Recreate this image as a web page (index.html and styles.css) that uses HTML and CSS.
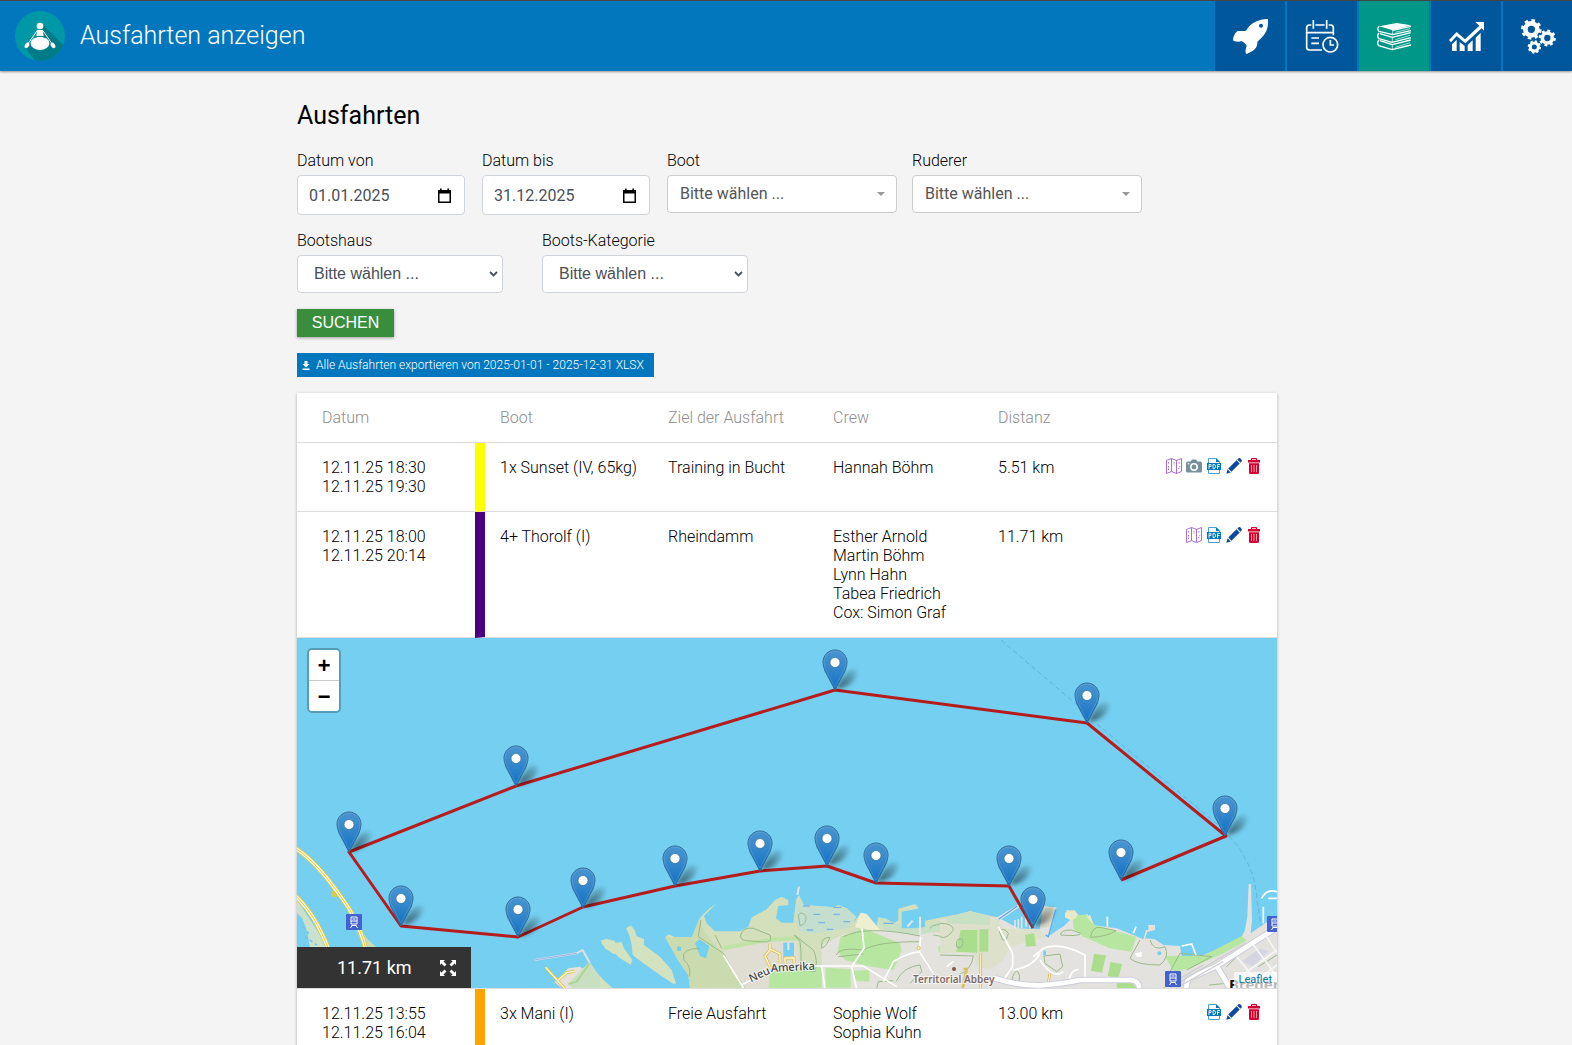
FILE: index.html
```html
<!DOCTYPE html>
<html lang="de">
<head>
<meta charset="utf-8">
<meta name="viewport" content="width=device-width, initial-scale=1">
<title>Ausfahrten anzeigen</title>
<link rel="stylesheet" href="styles.css">
</head>
<body>
<svg class="defs" aria-hidden="true">
  <defs>
    <linearGradient id="pin-fill" x1="0" y1="0" x2="0" y2="1"><stop offset="0" stop-color="#4795d0"/><stop offset=".35" stop-color="#3a8bcb"/><stop offset="1" stop-color="#126fc6"/></linearGradient>
    <filter id="soft" x="-40%" y="-40%" width="180%" height="180%"><feGaussianBlur stdDeviation="2"/></filter>
    <linearGradient id="pin-shade" x1="0" y1="1" x2="1" y2="0"><stop offset="0" stop-color="#000" stop-opacity=".6"/><stop offset="1" stop-color="#000" stop-opacity=".05"/></linearGradient>
    <g id="pin">
      <path d="M1-1C5-8 10-19 18-21C26-21 22-11 14-5Q8-2 1-1Z" fill="url(#pin-shade)" filter="url(#soft)"/>
      <path d="M0-40C-7-40-12-34-12-28C-12-25-11-22-10-19L0 0L10-19C11-22 12-25 12-28C12-34 7-40 0-40Z" fill="url(#pin-fill)" stroke="#2e6c97"/>
      <path d="M0-39C-6-39-11-34-11-28C-11-25-10-22-9-20L0-3L9-20C10-22 11-25 11-28C11-34 6-39 0-39Z" fill="none" stroke="#fff" stroke-opacity=".13"/>
      <circle cy="-27.500" r="5" fill="#fff" stroke="#2e6c97" stroke-opacity=".7"/>
    </g>
    <symbol id="i-map" viewBox="0 0 16 16"><g fill="none" stroke="#a86fd0"><path d="M.5 2.500L5.500.5V13.500L.5 15.500ZM5.500.5L10.500 2.500V15.500L5.500 13.500M10.500 2.500L15.500.5V13.500L10.500 15.500"/><path d="M2.500 4V6M2.500 8V12M8 4V7M12.500 11L14 8M13 4V6" stroke-dasharray="1.500 1"/></g></symbol>
    <symbol id="i-camera" viewBox="0 0 16 16"><path d="M1.500 3.500H4.500L6 1.500H10L11.500 3.500H14.500Q16 3.500 16 5V13Q16 14.500 14.500 14.500H1.500Q0 14.500 0 13V5Q0 3.500 1.500 3.500Z" fill="#78909c"/><circle cx="8" cy="9" r="3.200" fill="none" stroke="#fff" stroke-width="1.600"/><circle cx="2.500" cy="5.800" r=".8" fill="#fff"/></symbol>
    <symbol id="i-pdf" viewBox="0 0 16 16"><path d="M2.500 6V.5H10L13.500 4V6M2.500 11V15.500H13.500V11" fill="#fff" stroke="#4a9fd2"/><path d="M10 0V4H14Z" fill="#0277bd"/><rect x="1" y="5" width="14" height="7" fill="#0277bd"/><path d="M3 11V6.500H5V8.500H3M7 6.500V10.500H8Q9.500 10.500 9.500 8.500Q9.500 6.500 8 6.500H7M11.500 11V6.500H14M11.500 8.500H13.500" fill="none" stroke="#fff" stroke-opacity=".85"/></symbol>
    <symbol id="i-pen" viewBox="0 0 16 16"><path d="M2.300 10.500L10.500 2.300L13.700 5.500L5.500 13.700ZM11.300 1.500L12.200.6Q13.500-.6 14.800.8Q16.500 2.300 15.400 3.800L14.500 4.700ZM1.600 11.300L4.700 14.400L.3 15.700Z" fill="#0d47a1"/></symbol>
    <symbol id="i-trash" viewBox="0 0 16 16"><path d="M5.500 2V1.200Q5.500.6 6 .6H10Q10.500.6 10.500 1.200V2" fill="none" stroke="#d50032" stroke-width="1.200"/><path d="M2 2H14V4.500H2ZM3 5.200H13V14.500Q13 16 11.500 16H4.500Q3 16 3 14.500Z" fill="#d50032"/><path d="M5.500 7V14M8 7V14M10.500 7V14" stroke="#f99" stroke-width="1"/></symbol>
    <symbol id="i-chevron" viewBox="0 0 9 6"><path d="M1 1L4.500 4.500L8 1" fill="none" stroke="#495057" stroke-width="1.800"/></symbol>
    <symbol id="i-caret" viewBox="0 0 8 4"><path d="M0 0H8L4 4Z" fill="#999"/></symbol>
    <symbol id="i-date" viewBox="0 0 13 15"><path d="M0 2H13V15H0ZM1.500 5.500V13.500H11.500V5.500Z" fill="#000" fill-rule="evenodd"/><path d="M2.800.5V3M10.200.5V3" stroke="#000" stroke-width="1.600"/></symbol>
  </defs>
</svg>

<header class="topbar">
  <a class="logo" href="#" aria-label="Startseite">
    <svg viewBox="45 33 150 150" width="50" height="50">
      <clipPath id="disc"><circle cx="120" cy="108" r="75"/></clipPath>
      <circle cx="120" cy="108" r="75" fill="#0097a7"/>
      <path d="M127 72L210 155L150 200L110 190L76 142L110 110Z" fill="#007c89" clip-path="url(#disc)"/>
      <g fill="#fff"><circle cx="120" cy="78" r="10"/><path d="M112 90H128L131 108H109Z"/><ellipse cx="120" cy="130" rx="28" ry="20"/><ellipse cx="81" cy="136" rx="6" ry="9" transform="rotate(35 81 136)"/><ellipse cx="159" cy="136" rx="6" ry="9" transform="rotate(-35 159 136)"/></g>
      <path d="M112 91L82 134M128 91L158 134" stroke="#fff" stroke-width="3"/>
      <path d="M104 114Q120 103 136 114" stroke="#007c89" stroke-width="2" fill="none"/>
    </svg>
  </a>
  <h1 class="topbar-title">Ausfahrten anzeigen</h1>
  <nav class="mainnav">
    <a href="#" aria-label="Start"><svg viewBox="96 54 108 108"><path d="M204 57C206 85 198 105 172 125C173 142 165 152 140 162C134 158 137 146 140 138C136 130 132 127 124 123C116 127 108 124 100 122C97 115 105 98 113 93C122 92 130 94 138 92C152 68 175 58 204 57Z" fill="#fff"/><circle cx="183" cy="77" r="6" fill="#01579b"/></svg></a>
    <a href="#" aria-label="Kalender"><svg viewBox="312 54 108 108"><g fill="none" stroke="#fff" stroke-width="5"><path d="M366 150H328Q320 150 320 142V83Q320 75 328 75H334M346 75H374M386 75H392Q400 75 400 83V106M320 98H400M340 60V86M380 60V86M334 114H357M334 130H357"/><circle cx="391" cy="134" r="22"/><path d="M391 120V135H402"/></g></svg></a>
    <a class="active" href="#" aria-label="Ausfahrten"><svg viewBox="528 54 108 108"><path d="M538 79L590 69L634 76L578 91Z" fill="#fff"/><g fill="none" stroke="#fff" stroke-width="4" stroke-linejoin="round"><path d="M538 79Q529 86 537 94L578 104L633 92M578 91L633 79"/><path d="M537 99Q529 108 537 116L576 127L633 113M540 101L577 112L632 98"/><path d="M537 120Q529 129 536 137L576 149L633 135M540 122L577 134L632 120"/></g><path d="M578 91V104M577 112V127M577 134V149M586 97L630 86M586 119L630 106M586 142L630 128" stroke="#fff" stroke-width="2"/></svg></a>
    <a href="#" aria-label="Statistik"><svg viewBox="744 54 108 108"><g fill="#fff"><path d="M826 66H852V92L845 85L796 130L770 108L753 127L747 120L770 96L795 118L838 77Z"/><path d="M756 133L770 119V153H756ZM779 126L794 138V153H779ZM803 135L818 121V153H803ZM827 113L842 98V153H827Z"/></g></svg></a>
    <a href="#" aria-label="Einstellungen"><svg viewBox="960 54 108 108"><g fill="none" stroke="#fff"><circle cx="994" cy="88" r="18" stroke-width="14"/><circle cx="994" cy="88" r="27" stroke-width="8" pathLength="16" stroke-dasharray="1"/><circle cx="1042" cy="114" r="15" stroke-width="11"/><circle cx="1042" cy="114" r="22" stroke-width="7" pathLength="16" stroke-dasharray="1"/><circle cx="1003" cy="141" r="12" stroke-width="9"/><circle cx="1003" cy="141" r="17" stroke-width="6" pathLength="16" stroke-dasharray="1"/></g></svg></a>
  </nav>
</header>

<main class="page">
  <h2 class="page-title">Ausfahrten</h2>
  <form class="filter">
    <div class="filter-row">
      <div class="field date">
        <label for="von">Datum von</label>
        <div class="control"><input id="von" type="text" value="01.01.2025"><svg class="mark-date"><use href="#i-date"/></svg></div>
      </div>
      <div class="field date">
        <label for="bis">Datum bis</label>
        <div class="control"><input id="bis" type="text" value="31.12.2025"><svg class="mark-date"><use href="#i-date"/></svg></div>
      </div>
      <div class="field search">
        <label for="boot">Boot</label>
        <div class="control"><select id="boot"><option>Bitte wählen ...</option></select><svg class="mark-caret"><use href="#i-caret"/></svg></div>
      </div>
      <div class="field search">
        <label for="ruderer">Ruderer</label>
        <div class="control"><select id="ruderer"><option>Bitte wählen ...</option></select><svg class="mark-caret"><use href="#i-caret"/></svg></div>
      </div>
    </div>
    <div class="filter-row">
      <div class="field plain">
        <label for="haus">Bootshaus</label>
        <div class="control"><select id="haus"><option>Bitte wählen ...</option></select><svg class="mark-chevron"><use href="#i-chevron"/></svg></div>
      </div>
      <div class="field plain">
        <label for="kategorie">Boots-Kategorie</label>
        <div class="control"><select id="kategorie"><option>Bitte wählen ...</option></select><svg class="mark-chevron"><use href="#i-chevron"/></svg></div>
      </div>
    </div>
    <button class="submit" type="submit">SUCHEN</button>
  </form>
  <a class="export" href="#"><svg viewBox="0 0 8 9" width="8" height="9"><path d="M2.500 0H5.500V3H7.500L4 6.500L.5 3H2.500ZM.5 7.500H7.500V9H.5Z" fill="#fff"/></svg>Alle Ausfahrten exportieren von 2025-01-01 - 2025-12-31 XLSX</a>

  <table class="trips">
    <colgroup><col class="c-date"><col class="c-boat"><col class="c-goal"><col class="c-crew"><col></colgroup>
    <thead>
      <tr><th>Datum</th><th>Boot</th><th>Ziel der Ausfahrt</th><th>Crew</th><th>Distanz</th></tr>
    </thead>
    <tbody>
      <tr>
        <td>12.11.25 18:30<br>12.11.25 19:30</td><td class="yellow">1x Sunset (IV, 65kg)</td><td>Training in Bucht</td><td>Hannah Böhm</td>
        <td><div class="last"><span>5.51 km</span><span class="actions"><a href="#" aria-label="Karte"><svg><use href="#i-map"/></svg></a><a href="#" aria-label="Fotos"><svg><use href="#i-camera"/></svg></a><a href="#" aria-label="PDF"><svg><use href="#i-pdf"/></svg></a><a href="#" aria-label="Bearbeiten"><svg><use href="#i-pen"/></svg></a><a href="#" aria-label="Löschen"><svg><use href="#i-trash"/></svg></a></span></div></td>
      </tr>
      <tr>
        <td>12.11.25 18:00<br>12.11.25 20:14</td><td class="indigo">4+ Thorolf (I)</td><td>Rheindamm</td><td>Esther Arnold<br>Martin Böhm<br>Lynn Hahn<br>Tabea Friedrich<br>Cox: Simon Graf</td>
        <td><div class="last"><span>11.71 km</span><span class="actions"><a href="#" aria-label="Karte"><svg><use href="#i-map"/></svg></a><a href="#" aria-label="PDF"><svg><use href="#i-pdf"/></svg></a><a href="#" aria-label="Bearbeiten"><svg><use href="#i-pen"/></svg></a><a href="#" aria-label="Löschen"><svg><use href="#i-trash"/></svg></a></span></div></td>
      </tr>
      <tr>
        <td class="map-cell" colspan="5">
          <div class="map">
            <svg class="map-canvas" viewBox="0 0 980 350" preserveAspectRatio="xMinYMin slice" role="img" aria-label="Karte der Ausfahrt">
              <rect width="980" height="350" fill="#75cff0"/>
              <path d="M704 2L793 78M800 86L925 190M932 198Q958 226 960 262L966 300" fill="none" stroke="#5fb4e4" stroke-dasharray="5 3"/>
              <!-- western shore and motorway -->
              <g transform="translate(-12 182) scale(.33333)">
                <path d="M36 240L132 384H75L68 340L52 295L36 280Z" fill="#c9e1cd"/>
                <path d="M55 320L75 345M60 350L95 375" stroke="#7db8e8" stroke-width="4" stroke-dasharray="9 9"/>
                <path d="M212 325L232 335L245 355L272 380H235Z" fill="#cdddb2"/>
                <g fill="none"><path d="M30 84C90 122 140 190 190 262C212 300 232 342 243 390M30 226C75 270 102 315 132 390M148 212V230" stroke="#d9c94a" stroke-width="15"/><path d="M30 84C90 122 140 190 190 262C212 300 232 342 243 390M30 226C75 270 102 315 132 390" stroke="#fbf7d8" stroke-width="10"/><path d="M30 84C90 122 140 190 190 262C212 300 232 342 243 390M30 226C75 270 102 315 132 390" stroke="#d9c94a" stroke-width="3"/></g>
                <path d="M748 420L875 400L893 390L914 428" fill="none" stroke="#e0e0e0" stroke-width="6"/><path d="M748 420L875 400" stroke="#6f9df0" stroke-width="2"/>
                <path d="M808 486L825 470L850 445L885 440L900 450L862 504H830Z" fill="#e6e0dc"/>
                <path d="M862 504L850 492L890 448L914 426L945 470L985 506Z" fill="#c8e0c0"/>
                <path d="M850 492L875 485L912 432" fill="none" stroke="#a9d692" stroke-width="6"/>
                <path d="M782 442L838 504M820 480L845 458L868 454" fill="none" stroke="#d9c94a" stroke-width="9"/><path d="M782 442L838 504M820 480L845 458L868 454" fill="none" stroke="#fbf7d8" stroke-width="4"/>
                <path d="M947 362L965 357L990 362L998 402H985L960 385Z" fill="#d3e2bf"/>
              </g>
              <!-- harbour side, west half -->
              <g transform="translate(303 182) scale(.33333)">
                <g fill="#d3e2bf"><path d="M2 362L20 358L40 370L65 366L72 385L97 420L92 434L60 415L30 388L8 375Z"/><path d="M78 325L92 316L104 330L110 348L133 358L131 374L180 410L215 450L228 490L220 492L180 465L130 430L98 405L95 375L88 345Z"/><path d="M0 468L30 506H0Z"/></g>
                <path d="M270 506L265 465L240 430L220 395L196 352L205 343L225 352L275 352L290 330L303 290L325 268L350 250L312 288L320 310L345 334H420L445 320L455 292L500 268L525 240L545 230L565 240V255L535 258L528 295L545 308L580 308L588 240L597 225L612 255L700 262L715 255L740 265L768 290L760 310L782 278L800 282L830 318L835 292L860 296L880 312L895 300V266L945 252L957 265L910 276L905 320L950 332L975 350V302L1060 285V506Z" fill="#d3e0bb"/>
                <path d="M370 392L500 358L590 350L600 440L520 460L500 506H430Z" fill="#e0ddd2"/>
                <path d="M665 375L725 345L800 325L960 340L1060 335V506H665Z" fill="#e3e2dd"/>
                <path d="M597 240L612 255L700 262L740 265L768 290L745 325L650 340L600 335L583 300Z" fill="#c5dfcf"/>
                <path d="M782 278L800 282L830 318L845 335L765 322Z" fill="#eeeed0"/>
                <path d="M835 292L890 310L960 325L1060 290V320L960 345L850 330Z" fill="#c8e0c4"/>
                <path d="M610 258H630M700 262H725M640 283H660M700 283H720M730 305H750M620 330H640M680 328H700M655 308H675M850 310H880" stroke="#78b4e6" stroke-width="4"/>
                <path d="M300 290L310 330L350 380L440 506L368 506L270 506L265 465L240 430L220 395L196 352L275 352Z" fill="#cadbb0"/>
                <path d="M370 385L500 360L600 355" fill="none" stroke="#bfe3a5" stroke-width="12"/>
                <g fill="#b6e6a0"><path d="M712 395L722 350L790 325L900 370L905 392L880 450L800 438L735 420Z"/><path d="M508 458L640 440L665 445V506H508Z"/><path d="M677 443L752 448V503H677ZM762 452L808 450V485L762 482ZM1015 378H1060V395H1015Z"/></g>
                <g fill="#75cff0"><path d="M285 370L298 358L328 378L318 415L300 408Z"/><circle cx="237" cy="386" r="7"/><path d="M550 368H582V408L550 412Z"/><path d="M905 275L950 268V325H905Z"/></g>
                <path d="M960 290V365M922 320L938 302M592 225L597 200M565 368V390" stroke="#e6e6e6" stroke-width="6"/>
                <g fill="none" stroke="#9bb98b" stroke-width="3"><path d="M303 300L295 350L370 400L425 500M345 345L365 385M300 385Q240 385 252 420Q275 440 268 470M422 345Q430 320 460 325L510 345Q520 368 490 366L440 362Q420 360 422 345ZM583 345L640 390Q655 420 645 455L602 448Q605 400 600 365ZM595 285Q605 270 618 290Q620 310 600 318ZM665 375Q665 352 690 352Q680 380 665 384ZM708 405Q720 380 790 390Q830 365 958 365M715 410L790 402M730 350Q800 315 960 348M990 325Q1000 308 1060 312M1000 345L1060 355M888 485Q910 440 960 435L965 455L930 490M830 506L835 485L880 482"/></g>
                <g fill="none" stroke="#fff" stroke-width="5"><path d="M786 325L792 385L755 440L770 506M630 438H790L890 500M665 440L675 506M850 485L880 425Q920 400 958 395L962 350M958 395L1000 460M425 495L500 455M370 405L430 504"/></g>
                <path d="M510 370V390L495 408L510 440M512 388L540 402V430M555 430V414H582V430" fill="none" stroke="#d9c05a" stroke-width="9"/><path d="M510 370V390L495 408L510 440M512 388L540 402V430M555 430V414H582V430" fill="none" stroke="#fff5cf" stroke-width="4"/><circle cx="956" cy="384" r="5" fill="#fff5cf" stroke="#d9c05a" stroke-width="3"/>
              </g>
              <!-- harbour side, east half -->
              <g transform="translate(643 182) scale(.33333)">
                <path d="M20 292L90 274L130 285L172 292L240 250L246 256L185 298L235 325L300 328L310 258L350 262L328 348L345 335L372 318L392 298L375 292L380 270L405 272L420 290L442 282L460 315L495 320L530 325L580 345L610 358L618 330L625 330V315H645V330L622 335L615 355L645 358L670 375L720 378L725 410L790 405L840 385L905 350L915 330L922 290L926 192L933 192L936 300L932 340L975 310L1015 290V506H20Z" fill="#e3e2de"/>
                <path d="M0 300L90 274L170 292L190 325L300 328L320 350L210 380L190 420L150 450L110 440L100 400L0 400Z" fill="#dde1cb"/>
                <path d="M185 298L240 262V322Z" fill="#75cff0"/>
                <path d="M240 275L300 290L296 326L236 324Z" fill="#75cff0"/>
                <path d="M20 292L90 274L150 288L150 315L20 310Z" fill="#c8e0c4"/>
                <path d="M310 260L348 264L330 320L300 325Z" fill="#dcdccd"/>
                <g fill="#aade8d"><path d="M62 330H112V398L48 395ZM118 328H145V395H118ZM255 345L282 340L288 378L258 380ZM462 402L498 406L486 458L453 452ZM512 426L546 432L535 474L503 468ZM530 490L570 484L590 504H530Z"/></g>
                <path d="M398 285L440 284L465 316L588 350L575 395L510 385L430 350L400 325ZM675 408L790 407L905 348L920 362L850 400L750 445L700 455Z" fill="#b6e6a0"/>
                <path d="M375 278L405 270L412 290L395 302L375 292ZM450 284L462 315L440 292Z" fill="#ebe8c8"/>
                <g fill="none" stroke="#9bb98b" stroke-width="3"><path d="M0 310Q40 310 40 330Q20 360 0 350M50 380Q45 355 65 356Q75 370 60 384ZM0 405L100 408Q95 450 55 465M178 335Q190 320 205 340Q200 365 188 360ZM362 345Q360 330 395 330L422 340Q420 350 362 345ZM453 345Q460 320 480 322L528 332Q500 350 453 352ZM600 360L570 415Q590 435 660 435Q690 410 675 380Q640 395 630 360M690 455L720 400L815 410L740 450M312 408L360 402L368 440L350 455L315 430ZM900 400L860 440M218 470Q230 440 238 465V490H218ZM808 495L860 490M955 440L1011 405"/></g>
                <path d="M325 348L345 265M225 300V325M235 298V325M245 290V325M258 285V320M270 290V325" stroke="#e6e6e6" stroke-width="5"/>
                <path d="M176 298L232 258M317 345L325 350L347 268" fill="none" stroke="#57adef" stroke-width="4"/>
                <g fill="none" stroke="#fff" stroke-width="5"><path d="M175 320L218 400V440L190 480M280 410L310 385Q360 365 435 405V478M220 450Q280 440 300 400M300 420Q340 480 370 455M20 440L40 425M385 490Q390 450 415 448M502 320V290M580 340L588 320M725 378L755 372L768 405M965 235Q980 205 1011 215M985 235H1011M970 260V310"/></g>
                <g fill="none" stroke="#d9c05a" stroke-width="8"><path d="M122 400V504M70 447H80L68 504M330 460L324 490"/></g><path d="M122 400V504M330 460L324 490" stroke="#fff5cf" stroke-width="3"/>
                <g fill="none"><path d="M165 475Q230 497 300 496Q380 490 420 480H560Q595 476 598 504M740 504Q735 480 760 470L830 438L1015 320M830 438L872 508" stroke="#cdcdde" stroke-width="20"/><path d="M165 475Q230 497 300 496Q380 490 420 480H560Q595 476 598 504M740 504Q735 480 760 470L830 438L1015 320M830 438L872 508" stroke="#fff" stroke-width="14"/></g>
                <path d="M670 504L790 435M690 504L830 420L915 370M710 504L850 424" stroke="#cfcfcf" stroke-width="4"/>
                <path d="M905 425L960 385L985 395L940 440Z" fill="#d5d5e2"/>
                <path d="M940 375L1011 470M980 350L1011 400M890 410L940 470M900 470L1011 390M950 480L1011 435" stroke="#f6f6f6" stroke-width="5"/>
                <path d="M585 400L605 396V410L590 410Z" fill="#fff"/><circle cx="658" cy="400" r="6" fill="#75cff0"/><rect x="310" y="392" width="8" height="14" fill="#75cff0"/>
                <circle cx="42" cy="447" r="6" fill="#7b5a50"/>
              </g>
              <g id="station"><rect x="49" y="276" width="16" height="16" rx="1" fill="#4361cf"/><path d="M54 279H60V286H54ZM54 283H60M55.500 281H58.500M54.500 287.500H59.500M53.500 290L55 287.500M60.500 290L59 287.500" fill="none" stroke="#fff"/></g><use href="#station" x="819" y="57"/><use href="#station" x="921" y="2"/>
              <text class="place" transform="rotate(-25 455 344)" x="454" y="344">Neu</text>
              <text class="place" transform="rotate(-3 474 334)" x="474" y="334">Amerika</text>
              <text class="abbey" x="616" y="345">Territorial Abbey</text>
              <text class="town" x="932" y="352">Bregenz</text>
              <path d="M824 242L929 198L790 85L538 52L219 148L52 214L104 288L221 299L286 269L378 248L463 233L530 228L579 245L712 248L736 290" fill="none" stroke="#b71c1c" stroke-width="3" stroke-linejoin="round"/>
              <g><use href="#pin" x="538" y="52"/><use href="#pin" x="790" y="85"/><use href="#pin" x="219" y="148"/><use href="#pin" x="928" y="198"/><use href="#pin" x="52" y="214"/><use href="#pin" x="530" y="228"/><use href="#pin" x="463" y="233"/><use href="#pin" x="824" y="242"/><use href="#pin" x="579" y="245"/><use href="#pin" x="378" y="248"/><use href="#pin" x="712" y="248"/><use href="#pin" x="286" y="270"/><use href="#pin" x="104" y="288"/><use href="#pin" x="736" y="289"/><use href="#pin" x="221" y="299"/></g>
            </svg>
            <div class="zoom"><button type="button" aria-label="Vergrößern">+</button><button type="button" aria-label="Verkleinern">−</button></div>
            <div class="distance"><span>11.71 km</span><button type="button" aria-label="Vollbild"><svg viewBox="0 0 16 16" width="16" height="16"><path d="M0 0H5L3.500 1.500L6.500 4.500L4.500 6.500L1.500 3.500L0 5ZM16 0V5L14.500 3.500L11.500 6.500L9.500 4.500L12.500 1.500L11 0ZM0 16V11L1.500 12.500L4.500 9.500L6.500 11.500L3.500 14.500L5 16ZM16 16H11L12.500 14.500L9.500 11.500L11.500 9.500L14.500 12.500L16 11Z" fill="#fff"/></svg></button></div>
            <div class="attribution"><a href="#">Leaflet</a></div>
          </div>
        </td>
      </tr>
      <tr>
        <td>12.11.25 13:55<br>12.11.25 16:04</td><td class="orange">3x Mani (I)</td><td>Freie Ausfahrt</td><td>Sophie Wolf<br>Sophia Kuhn<br>Hannah Böhm</td>
        <td><div class="last"><span>13.00 km</span><span class="actions"><a href="#" aria-label="PDF"><svg><use href="#i-pdf"/></svg></a><a href="#" aria-label="Bearbeiten"><svg><use href="#i-pen"/></svg></a><a href="#" aria-label="Löschen"><svg><use href="#i-trash"/></svg></a></span></div></td>
      </tr>
    </tbody>
  </table>
</main>
</body>
</html>
```

FILE: styles.css
```css
* { box-sizing: border-box; }
html { scrollbar-width: none; }
body {
  margin: 0;
  background: #f4f4f4;
  color: #000;
  font: 300 16px/19px Roboto, "Liberation Sans", sans-serif;
}
svg { display: block; }
.defs { position: absolute; width: 0; height: 0; }

.topbar {
  display: flex;
  align-items: center;
  height: 71px;
  padding-left: 15px;
  border-top: 1px solid #444;
  background: #0277bd;
  color: #fff;
  box-shadow: 0 1px 2px rgba(0, 0, 0, .4);
}
.topbar-title {
  flex: 1;
  margin: 0 0 0 15px;
  font-size: 25px;
  line-height: 30px;
  font-weight: 300;
}
.mainnav { display: flex; gap: 2px; }
.mainnav a {
  display: flex;
  align-items: center;
  justify-content: center;
  width: 70px;
  height: 70px;
  background: #01579b;
}
.mainnav a:last-child { width: 69px; }
.mainnav a.active { background: #009688; }
.mainnav svg { width: 36px; height: 36px; }

.page {
  max-width: 982px;
  margin: 0 auto;
  padding: 30px 0 0 2px;
}
.page-title {
  margin: 0 0 20px;
  font-size: 25px;
  line-height: 30px;
  font-weight: 400;
}

.filter { margin: 0 0 16px; }
.filter-row { display: flex; flex-wrap: wrap; margin-bottom: 16px; }
.field { display: flex; flex-direction: column; gap: 5px; }
.field.date { width: 185px; padding-right: 17px; }
.field.search { width: 245px; padding-right: 15px; }
.field.plain { width: 245px; padding-right: 39px; }
.control { display: grid; align-items: center; }
.control > * { grid-area: 1 / 1; }
.control svg { justify-self: end; pointer-events: none; }
.control input,
.control select {
  appearance: none;
  width: 100%;
  height: 38px;
  margin: 0;
  border: 1px solid #ced4da;
  border-radius: 4px;
  background: #fff;
  color: #495057;
  font: 400 16px/19px Roboto, sans-serif;
}
.control input { height: 40px; padding: 0 11px; }
.search select { padding: 0 12px 2px; border-color: #ccc; color: #555; }
.plain select { padding: 0 16px 2px; font-family: "Liberation Sans", sans-serif; }
.mark-date { width: 13px; height: 15px; margin-right: 14px; }
.mark-caret { width: 8px; height: 4px; margin-right: 12px; }
.mark-chevron { width: 9px; height: 6px; margin-right: 5px; }

.submit {
  display: block;
  width: 97px;
  height: 28px;
  padding: 0;
  border: 0;
  background: #388e3c;
  color: #fff;
  font: 400 16px/28px "Liberation Sans", sans-serif;
  box-shadow: 0 1px 3px rgba(0, 0, 0, .35);
}
.export {
  display: flex;
  align-items: center;
  gap: 6px;
  width: fit-content;
  height: 24px;
  margin-bottom: 16px;
  padding: 0 10px 0 5px;
  background: #0277bd;
  color: #fff;
  font-size: 12px;
  font-weight: 300;
  text-decoration: none;
}

.trips {
  width: 100%;
  table-layout: fixed;
  border-spacing: 0;
  background: #fff;
  box-shadow: 0 1px 3px rgba(0, 0, 0, .3);
}
.c-date, .c-boat { width: 178px; }
.c-goal, .c-crew { width: 165px; }
.trips th,
.trips td {
  padding: 15px;
  border-bottom: 1px solid #ddd;
  text-align: left;
  vertical-align: top;
  font-weight: 300;
}
.trips th { color: #8e8e8e; }
.trips th:first-child,
.trips td:first-child { padding-left: 25px; }
.trips th:nth-child(2) { padding-left: 25px; }
.trips td.yellow { border-left: 10px solid #ff0; }
.trips td.indigo { border-left: 10px solid #4b0082; }
.trips td.orange { border-left: 10px solid #ffa500; }
.trips td.map-cell { padding: 0; }
.last { display: flex; justify-content: space-between; }
.actions { display: flex; gap: 4px; }
.actions svg { width: 16px; height: 16px; }

.map { position: relative; height: 350px; overflow: hidden; }
.map-canvas { width: 100%; height: 350px; }
.place, .abbey, .town { font-family: "Noto Sans", sans-serif; paint-order: stroke; stroke: #fff; stroke-width: 2px; }
.place { font-size: 11px; font-weight: 500; fill: #444; stroke-opacity: .7; }
.abbey { font-size: 10px; font-weight: 600; fill: #806a66; stroke-opacity: .7; }
.town { font-size: 15px; font-weight: 700; fill: #111; }
.zoom {
  position: absolute;
  top: 10px;
  left: 10px;
  border: 2px solid rgba(0, 0, 0, .25);
  border-radius: 5px;
  background-clip: padding-box;
}
.zoom button {
  display: block;
  width: 30px;
  height: 30px;
  padding: 6px 0 0;
  border: 0;
  border-radius: 0 0 3px 3px;
  background: #fff;
  color: #000;
  font: 700 22px/24px "Liberation Mono", monospace;
}
.zoom button:first-child { height: 31px; border-bottom: 1px solid #ccc; border-radius: 3px 3px 0 0; }
.distance {
  position: absolute;
  left: 0;
  bottom: 0;
  display: flex;
  align-items: center;
  justify-content: space-between;
  width: 174px;
  height: 41px;
  padding: 0 15px 0 40px;
  background: #333;
  color: #fff;
  font-size: 18px;
  font-weight: 400;
}
.distance button { padding: 0; border: 0; background: none; }
.attribution {
  position: absolute;
  right: 0;
  bottom: 0;
  padding: 0 5px;
  background: rgba(255, 255, 255, .7);
  font-size: 11px;
  line-height: 16px;
  font-weight: 400;
}
.attribution a { color: #0078a8; text-decoration: none; }
```
